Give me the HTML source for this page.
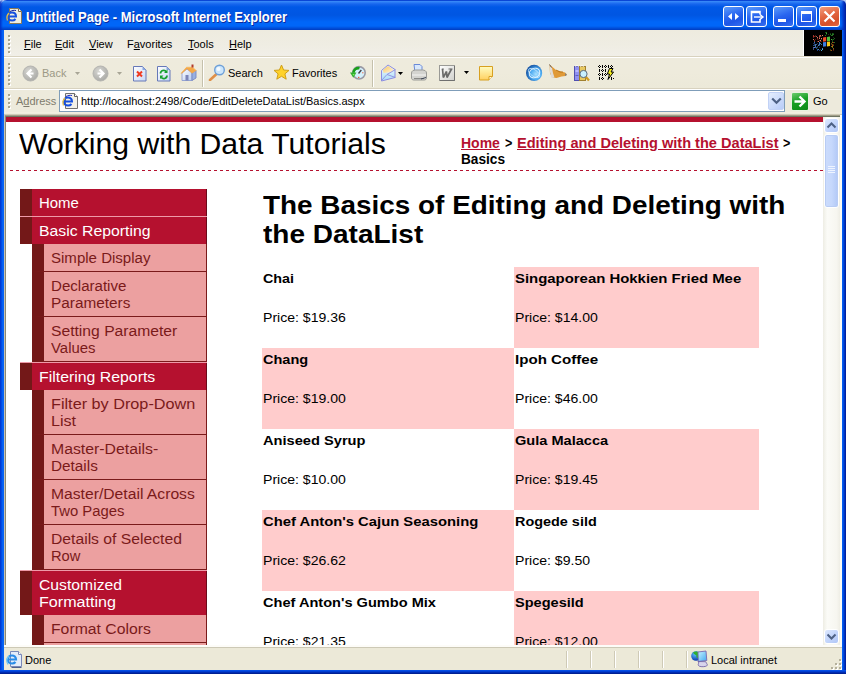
<!DOCTYPE html>
<html><head><meta charset="utf-8">
<style>
*{margin:0;padding:0;box-sizing:border-box}
html,body{width:846px;height:674px;overflow:hidden;background:#B4CAF4;font-family:"Liberation Sans",sans-serif}
div,svg{position:absolute}
.t{white-space:nowrap;transform-origin:0 0}
.t u{text-decoration:underline}
.c{font-size:11px;line-height:14px;color:#000;white-space:nowrap}
.btn{top:6px;width:21px;height:21px;border:1px solid #fff;border-radius:3px;background:linear-gradient(160deg,#5C9CFA 0%,#2A66F0 45%,#1E56E6 70%,#3570F2 100%)}
.grip{width:2px;background-image:linear-gradient(#A8A48E 2px,transparent 2px);background-size:2px 4px}
.gripw{width:2px;background-image:linear-gradient(#FFFFFF 2px,transparent 2px);background-size:2px 4px}
.sep{top:651px;width:2px;height:17px;border-left:1px solid #CFCAB6;border-right:1px solid #fff}
</style></head><body>
<!-- title bar -->
<div style="left:0;top:0;width:846px;height:30px;border-radius:7px 7px 0 0;background:linear-gradient(#0A46D6 0px,#0A46D6 1px,#3D8EF8 1px,#2F80F6 2px,#1766EE 4px,#0058E6 7px,#0056E2 15px,#005EEE 19px,#0066F8 22px,#0066F8 26px,#0050DC 28px,#003CC0 30px)"></div>
<div style="left:0;top:0;width:3px;height:30px;border-radius:7px 0 0 0;background:linear-gradient(90deg,#0030C8,transparent)"></div>
<div style="left:841px;top:0;width:5px;height:30px;border-radius:0 7px 0 0;background:linear-gradient(90deg,transparent,#0030C0 60%,#001C98)"></div>
<svg style="left:4px;top:4px" width="22" height="24" viewBox="0 0 22 24">
  <path d="M5.5 4.5h9l3 3v12h-12z" fill="#F0EEE2" stroke="#8A7A5A"/>
  <path d="M14.5 4.5v3h3" fill="#fff" stroke="#7A6A50"/>
  <path d="M4.5 12.5h7.5c0-2.6-1.8-4-4-4s-4.2 1.6-4.2 4 2 4 4.3 4c1.4 0 2.6-.6 3.4-1.5" fill="none" stroke="#1550E0" stroke-width="2"/>
  <path d="M5 9c-2 2-2.5 5-1.5 7.5" fill="none" stroke="#E8C040" stroke-width="1.3"/>
  <path d="M6 7.5c2-1 4-1.5 6-1" fill="none" stroke="#1020A0" stroke-width="1"/>
</svg>
<div class="t" style="left:26px;top:7px;font-size:14px;line-height:20px;font-weight:bold;color:#fff;text-shadow:1px 1px 0 #0B2A9E;transform:scaleX(0.93)">Untitled Page - Microsoft Internet Explorer</div>
<div class="btn" style="left:723px"></div>
<svg style="left:723px;top:6px" width="21" height="21"><path d="M9 7v7l-4-3.5zM12 7v7l4-3.5z" fill="#fff"/></svg>
<div class="btn" style="left:746px"></div>
<svg style="left:746px;top:6px" width="21" height="21"><path d="M5.5 7.5V5.5h8.5v3M5.5 5.5v10.5h8.5v-3" fill="none" stroke="#fff" stroke-width="1.6"/><path d="M5.5 6.2h8.5" stroke="#fff" stroke-width="2"/><path d="M8 11h8" stroke="#fff" stroke-width="1.4"/><path d="M14 8.5l3 2.5-3 2.5" fill="none" stroke="#fff" stroke-width="1.4"/></svg>
<div class="btn" style="left:773px"></div>
<div style="left:778px;top:19px;width:8px;height:3px;background:#fff"></div>
<div class="btn" style="left:796px"></div>
<div style="left:801px;top:11px;width:11px;height:11px;border:1px solid #fff;border-top:3px solid #fff"></div>
<div class="btn" style="left:819px;background:linear-gradient(160deg,#F29C7C 0%,#E2643E 45%,#D5502A 75%,#E06A44 100%)"></div>
<svg style="left:819px;top:6px" width="21" height="21"><path d="M5.5 5.5l10 10M15.5 5.5l-10 10" stroke="#fff" stroke-width="2.2"/></svg>

<!-- frame -->
<div style="left:0;top:30px;width:4px;height:644px;background:linear-gradient(90deg,#0034D0 0,#0040DA 1px,#0058EE 2px,#0866F8 3px,#0A60F0 4px)"></div>
<div style="left:842px;top:30px;width:4px;height:644px;background:linear-gradient(90deg,#0866F8 0,#0054E8 1px,#0040D4 2px,#0028B0 3px,#001C98 4px)"></div>
<div style="left:0;top:670px;width:846px;height:4px;background:linear-gradient(#0A56EC 0,#0048E0 1px,#0034C4 2px,#00249E 3px,#001C88 4px)"></div>

<!-- menu bar -->
<div style="left:4px;top:30px;width:838px;height:26px;background:linear-gradient(#EEEBDF,#EFEDE3 60%,#F1EFE8)"></div>
<div style="left:4px;top:56px;width:838px;height:1px;background:#D8D2BF"></div>
<div style="left:4px;top:57px;width:838px;height:1px;background:#fff"></div>
<div class="gripw" style="left:9px;top:36px;height:18px"></div><div class="grip" style="left:8px;top:35px;height:18px"></div>
<div class="c" style="left:24px;top:37px"><u>F</u>ile</div>
<div class="c" style="left:55px;top:37px"><u>E</u>dit</div>
<div class="c" style="left:89px;top:37px"><u>V</u>iew</div>
<div class="c" style="left:127px;top:37px">F<u>a</u>vorites</div>
<div class="c" style="left:188px;top:37px"><u>T</u>ools</div>
<div class="c" style="left:229px;top:37px"><u>H</u>elp</div>
<div style="left:803px;top:30px;width:1px;height:26px;background:#fff"></div>
<div style="left:804px;top:30px;width:38px;height:26px;background:#000"></div>
<svg style="left:804px;top:30px" width="38" height="26" viewBox="0 0 38 26"><rect x="13" y="13" width="1" height="1" fill="#2050A8" opacity="0.57"/><rect x="17" y="8" width="1" height="1" fill="#B83020" opacity="0.59"/><rect x="15" y="7" width="1" height="1" fill="#F08878" opacity="0.48"/><rect x="9" y="17" width="1" height="1" fill="#8090E0" opacity="0.68"/><rect x="14" y="11" width="1" height="1" fill="#F08878" opacity="0.69"/><rect x="15" y="7" width="1" height="1" fill="#C03028" opacity="0.80"/><rect x="9" y="5" width="1" height="1" fill="#E06050" opacity="0.66"/><rect x="16" y="10" width="1" height="1" fill="#B83020" opacity="0.81"/><rect x="14" y="15" width="1" height="1" fill="#2050A8" opacity="0.30"/><rect x="9" y="15" width="1" height="1" fill="#2050A8" opacity="0.90"/><rect x="18" y="18" width="1" height="1" fill="#8090E0" opacity="0.45"/><rect x="16" y="13" width="1" height="1" fill="#3060C0" opacity="0.34"/><rect x="16" y="11" width="1" height="1" fill="#D04838" opacity="0.53"/><rect x="18" y="18" width="1" height="1" fill="#3060C0" opacity="0.43"/><rect x="18" y="5" width="1" height="1" fill="#F08878" opacity="0.89"/><rect x="12" y="6" width="1" height="1" fill="#E8A080" opacity="0.42"/><rect x="15" y="10" width="1" height="1" fill="#D04838" opacity="0.50"/><rect x="18" y="17" width="1" height="1" fill="#3060C0" opacity="0.38"/><rect x="16" y="5" width="1" height="1" fill="#F08878" opacity="0.78"/><rect x="10" y="13" width="1" height="1" fill="#2050A8" opacity="0.61"/><rect x="18" y="17" width="1" height="1" fill="#2050A8" opacity="0.69"/><rect x="10" y="11" width="1" height="1" fill="#E06050" opacity="0.30"/><rect x="17" y="20" width="1" height="1" fill="#50C0E0" opacity="0.48"/><rect x="17" y="8" width="1" height="1" fill="#F08878" opacity="0.90"/><rect x="15" y="14" width="1" height="1" fill="#3060C0" opacity="0.89"/><rect x="11" y="9" width="1" height="1" fill="#B83020" opacity="0.50"/><rect x="11" y="6" width="1" height="1" fill="#C03028" opacity="0.43"/><rect x="15" y="5" width="1" height="1" fill="#D04838" opacity="0.52"/><rect x="13" y="20" width="1" height="1" fill="#2050A8" opacity="0.80"/><rect x="10" y="11" width="1" height="1" fill="#E8A080" opacity="0.39"/><rect x="18" y="18" width="1" height="1" fill="#4890E8" opacity="0.74"/><rect x="10" y="15" width="1" height="1" fill="#50C0E0" opacity="0.42"/><rect x="18" y="19" width="1" height="1" fill="#50C0E0" opacity="0.35"/><rect x="9" y="6" width="1" height="1" fill="#B83020" opacity="0.88"/><rect x="11" y="16" width="1" height="1" fill="#60A8F0" opacity="0.55"/><rect x="18" y="12" width="1" height="1" fill="#50C0E0" opacity="0.41"/><rect x="16" y="6" width="1" height="1" fill="#E06050" opacity="0.59"/><rect x="15" y="14" width="1" height="1" fill="#3060C0" opacity="0.47"/><rect x="18" y="8" width="1" height="1" fill="#C03028" opacity="0.34"/><rect x="13" y="8" width="1" height="1" fill="#C03028" opacity="0.41"/><rect x="12" y="14" width="1" height="1" fill="#4890E8" opacity="0.36"/><rect x="10" y="12" width="1" height="1" fill="#60A8F0" opacity="0.69"/><rect x="15" y="14" width="1" height="1" fill="#4890E8" opacity="0.65"/><rect x="18" y="12" width="1" height="1" fill="#60A8F0" opacity="0.72"/><rect x="18" y="5" width="1" height="1" fill="#E8A080" opacity="0.34"/><rect x="9" y="9" width="1" height="1" fill="#E06050" opacity="0.90"/><rect x="9" y="13" width="1" height="1" fill="#8090E0" opacity="0.33"/><rect x="18" y="16" width="1" height="1" fill="#4890E8" opacity="0.78"/><rect x="18" y="10" width="1" height="1" fill="#E8A080" opacity="0.58"/><rect x="9" y="18" width="1" height="1" fill="#3060C0" opacity="0.82"/><rect x="14" y="14" width="1" height="1" fill="#2050A8" opacity="0.53"/><rect x="9" y="6" width="1" height="1" fill="#C03028" opacity="0.68"/><rect x="18" y="19" width="1" height="1" fill="#8090E0" opacity="0.50"/><rect x="18" y="16" width="1" height="1" fill="#2050A8" opacity="0.56"/><rect x="17" y="6" width="1" height="1" fill="#B83020" opacity="0.32"/><rect x="15" y="12" width="1" height="1" fill="#4890E8" opacity="0.87"/><rect x="10" y="17" width="1" height="1" fill="#8090E0" opacity="0.85"/><rect x="11" y="5" width="1" height="1" fill="#D04838" opacity="0.39"/><rect x="15" y="13" width="1" height="1" fill="#60A8F0" opacity="0.70"/><rect x="13" y="19" width="1" height="1" fill="#60A8F0" opacity="0.54"/><rect x="11" y="15" width="1" height="1" fill="#4890E8" opacity="0.83"/><rect x="12" y="14" width="1" height="1" fill="#60A8F0" opacity="0.43"/><rect x="10" y="10" width="1" height="1" fill="#C03028" opacity="0.73"/><rect x="18" y="9" width="1" height="1" fill="#E06050" opacity="0.37"/><rect x="13" y="19" width="1" height="1" fill="#2050A8" opacity="0.53"/><rect x="14" y="15" width="1" height="1" fill="#8090E0" opacity="0.80"/><rect x="18" y="12" width="1" height="1" fill="#3060C0" opacity="0.80"/><rect x="11" y="14" width="1" height="1" fill="#8090E0" opacity="0.73"/><rect x="14" y="9" width="1" height="1" fill="#B83020" opacity="0.31"/><rect x="10" y="12" width="1" height="1" fill="#3060C0" opacity="0.76"/><rect x="11" y="17" width="1" height="1" fill="#3060C0" opacity="0.89"/><rect x="10" y="6" width="1" height="1" fill="#B83020" opacity="0.69"/><rect x="17" y="20" width="1" height="1" fill="#8090E0" opacity="0.42"/><rect x="17" y="9" width="1" height="1" fill="#E8A080" opacity="0.31"/><rect x="13" y="16" width="1" height="1" fill="#4890E8" opacity="0.44"/><rect x="16" y="13" width="1" height="1" fill="#50C0E0" opacity="0.60"/><rect x="18" y="7" width="1" height="1" fill="#E8A080" opacity="0.84"/><rect x="9" y="19" width="1" height="1" fill="#8090E0" opacity="0.53"/><rect x="13" y="8" width="1" height="1" fill="#C03028" opacity="0.53"/><rect x="14" y="19" width="1" height="1" fill="#60A8F0" opacity="0.58"/><rect x="15" y="8" width="1" height="1" fill="#E8A080" opacity="0.82"/><rect x="16" y="19" width="1" height="1" fill="#3060C0" opacity="0.43"/><rect x="17" y="20" width="1" height="1" fill="#60A8F0" opacity="0.62"/><rect x="16" y="10" width="1" height="1" fill="#E8A080" opacity="0.81"/><rect x="12" y="6" width="1" height="1" fill="#F08878" opacity="0.51"/><rect x="13" y="9" width="1" height="1" fill="#C03028" opacity="0.43"/><rect x="17" y="11" width="1" height="1" fill="#C03028" opacity="0.40"/><rect x="12" y="17" width="1" height="1" fill="#4890E8" opacity="0.58"/><rect x="18" y="19" width="1" height="1" fill="#50C0E0" opacity="0.80"/><rect x="15" y="20" width="1" height="1" fill="#2050A8" opacity="0.65"/><rect x="15" y="17" width="1" height="1" fill="#2050A8" opacity="0.62"/><rect x="11" y="16" width="1" height="1" fill="#8090E0" opacity="0.40"/><rect x="14" y="19" width="1" height="1" fill="#60A8F0" opacity="0.49"/><rect x="12" y="18" width="1" height="1" fill="#50C0E0" opacity="0.42"/><rect x="17" y="20" width="1" height="1" fill="#50C0E0" opacity="0.46"/><rect x="13" y="11" width="1" height="1" fill="#C03028" opacity="0.60"/><rect x="15" y="5" width="1" height="1" fill="#C03028" opacity="0.61"/><rect x="13" y="17" width="1" height="1" fill="#50C0E0" opacity="0.37"/><rect x="9" y="7" width="1" height="1" fill="#B83020" opacity="0.58"/><rect x="18" y="17" width="1" height="1" fill="#2050A8" opacity="0.46"/><rect x="13" y="7" width="1" height="1" fill="#F08878" opacity="0.84"/><rect x="18" y="19" width="1" height="1" fill="#50C0E0" opacity="0.49"/><rect x="10" y="14" width="1" height="1" fill="#60A8F0" opacity="0.38"/><rect x="16" y="5" width="1" height="1" fill="#E06050" opacity="0.39"/><rect x="9" y="9" width="1" height="1" fill="#E8A080" opacity="0.51"/><rect x="15" y="6" width="1" height="1" fill="#E8A080" opacity="0.65"/><rect x="17" y="14" width="1" height="1" fill="#8090E0" opacity="0.42"/><rect x="14" y="11" width="1" height="1" fill="#F08878" opacity="0.68"/><rect x="17" y="14" width="1" height="1" fill="#50C0E0" opacity="0.42"/><rect x="15" y="15" width="1" height="1" fill="#50C0E0" opacity="0.43"/><rect x="27" y="5" width="1" height="1" fill="#30A030" opacity="0.49"/><rect x="29" y="3" width="1" height="1" fill="#30A030" opacity="0.38"/><rect x="28" y="3" width="1" height="1" fill="#208820" opacity="0.71"/><rect x="30" y="12" width="1" height="1" fill="#30A030" opacity="0.72"/><rect x="27" y="5" width="1" height="1" fill="#208820" opacity="0.80"/><rect x="29" y="7" width="1" height="1" fill="#30A030" opacity="0.32"/><rect x="26" y="3" width="1" height="1" fill="#30A030" opacity="0.37"/><rect x="22" y="3" width="1" height="1" fill="#50C040" opacity="0.86"/><rect x="21" y="2" width="1" height="1" fill="#208820" opacity="0.58"/><rect x="28" y="5" width="1" height="1" fill="#50C040" opacity="0.56"/><rect x="24" y="4" width="1" height="1" fill="#50C040" opacity="0.31"/><rect x="28" y="11" width="1" height="1" fill="#30A030" opacity="0.54"/><rect x="30" y="8" width="1" height="1" fill="#30A030" opacity="0.61"/><rect x="29" y="9" width="1" height="1" fill="#208820" opacity="0.86"/><rect x="26" y="4" width="1" height="1" fill="#208820" opacity="0.89"/><rect x="29" y="4" width="1" height="1" fill="#30A030" opacity="0.75"/><rect x="28" y="10" width="1" height="1" fill="#50C040" opacity="0.38"/><rect x="22" y="4" width="1" height="1" fill="#30A030" opacity="0.34"/><rect x="21" y="5" width="1" height="1" fill="#208820" opacity="0.84"/><rect x="21" y="5" width="1" height="1" fill="#208820" opacity="0.48"/><rect x="22" y="2" width="1" height="1" fill="#208820" opacity="0.90"/><rect x="27" y="9" width="1" height="1" fill="#50C040" opacity="0.89"/><rect x="28" y="4" width="1" height="1" fill="#50C040" opacity="0.60"/><rect x="28" y="9" width="1" height="1" fill="#30A030" opacity="0.36"/><rect x="27" y="20" width="1" height="1" fill="#D04020" opacity="0.62"/><rect x="27" y="16" width="1" height="1" fill="#C0A020" opacity="0.68"/><rect x="29" y="12" width="1" height="1" fill="#D04020" opacity="0.70"/><rect x="29" y="15" width="1" height="1" fill="#C0A020" opacity="0.53"/><rect x="29" y="19" width="1" height="1" fill="#D04020" opacity="0.67"/><rect x="26" y="20" width="1" height="1" fill="#A08810" opacity="0.47"/><rect x="27" y="14" width="1" height="1" fill="#D04020" opacity="0.47"/><rect x="28" y="17" width="1" height="1" fill="#A08810" opacity="0.70"/><rect x="28" y="12" width="1" height="1" fill="#C0A020" opacity="0.65"/><rect x="28" y="15" width="1" height="1" fill="#D04020" opacity="0.53"/><rect x="29" y="18" width="1" height="1" fill="#C0A020" opacity="0.65"/><rect x="28" y="14" width="1" height="1" fill="#C0A020" opacity="0.56"/><rect x="27" y="20" width="1" height="1" fill="#C0A020" opacity="0.33"/><rect x="26" y="19" width="1" height="1" fill="#A08810" opacity="0.39"/><rect x="29" y="14" width="1" height="1" fill="#D04020" opacity="0.37"/><rect x="28" y="16" width="1" height="1" fill="#C0A020" opacity="0.82"/><rect x="27" y="13" width="1" height="1" fill="#A08810" opacity="0.57"/><rect x="28" y="16" width="1" height="1" fill="#A08810" opacity="0.68"/><rect x="28" y="15" width="1" height="1" fill="#D04020" opacity="0.62"/><rect x="29" y="20" width="1" height="1" fill="#D04020" opacity="0.38"/><rect x="18" y="6" width="9" height="12" fill="#000"/>
<path d="M19 7.5l3.2-.5v4.3l-3.2.4z" fill="#F04A24"/>
<path d="M23 7l3-.5v4.4l-3 .4z" fill="#50C040"/>
<path d="M19 12.3l3.2-.4v4.4l-3.2.4z" fill="#3C7CE0"/>
<path d="M23 11.8l3-.4v4.6l-3 .4z" fill="#F8C818"/></svg>

<!-- toolbar -->
<div style="left:4px;top:58px;width:838px;height:30px;background:linear-gradient(#EEEBDD,#EEEBDC 50%,#ECE9D9)"></div>
<div style="left:4px;top:88px;width:838px;height:1px;background:#D8D2BF"></div>
<div style="left:4px;top:89px;width:838px;height:1px;background:#fff"></div>
<div class="gripw" style="left:9px;top:64px;height:22px"></div><div class="grip" style="left:8px;top:63px;height:22px"></div>
<svg style="left:22px;top:65px" width="17" height="17"><defs><radialGradient id="gb" cx="40%" cy="35%" r="70%"><stop offset="0" stop-color="#D8D8D4"/><stop offset="1" stop-color="#A8A8A4"/></radialGradient></defs><circle cx="8.5" cy="8.5" r="7.5" fill="url(#gb)" stroke="#B4B4B0" stroke-width="1"/><path d="M9.5 4.5l-4 4 4 4M5.5 8.5h6" stroke="#fff" stroke-width="2.2" fill="none"/></svg>
<div class="c" style="left:42px;top:66px;color:#9C9986">Back</div>
<svg style="left:75px;top:72px" width="6" height="4"><path d="M0 0h5l-2.5 3z" fill="#A8A596"/></svg>
<svg style="left:92px;top:65px" width="17" height="17"><circle cx="8.5" cy="8.5" r="7.5" fill="url(#gb)" stroke="#B4B4B0" stroke-width="1"/><path d="M7.5 4.5l4 4-4 4M11.5 8.5h-6" stroke="#fff" stroke-width="2.2" fill="none"/></svg>
<svg style="left:117px;top:72px" width="6" height="4"><path d="M0 0h5l-2.5 3z" fill="#A8A596"/></svg>
<svg style="left:133px;top:66px" width="14" height="16"><defs><linearGradient id="gd" x1="0" y1="0" x2="1" y2="1"><stop offset="0" stop-color="#FFFFFF"/><stop offset="1" stop-color="#C6D6F4"/></linearGradient></defs><path d="M.5.5h9l3.5 3.5v11H.5z" fill="url(#gd)" stroke="#6678B8"/><path d="M9.5.5v3.5h3.5" fill="#8CA8E0"/><path d="M4 5.5l5 5M9 5.5l-5 5" stroke="#F03A20" stroke-width="2"/></svg>
<svg style="left:157px;top:66px" width="14" height="16"><path d="M.5.5h9l3.5 3.5v11H.5z" fill="url(#gd)" stroke="#6678B8"/><path d="M9.5.5v3.5h3.5" fill="#8CA8E0"/><path d="M3.5 7.5a3.2 3.2 0 0 1 5.8-1.8M10 9.5a3.2 3.2 0 0 1-5.8 1.8" stroke="#18A030" stroke-width="1.8" fill="none"/><path d="M10.5 3.5v3.5H7z M3 13v-3.5h3.5z" fill="#18A030"/></svg>
<svg style="left:179px;top:63px" width="19" height="19" viewBox="0 0 19 19">
  <defs><linearGradient id="gh" x1="0" y1="0" x2="1" y2="1"><stop offset="0" stop-color="#FFFFFF"/><stop offset="1" stop-color="#B8CCF0"/></linearGradient></defs>
  <path d="M3 10l5-4 5 4v7.5H3z" fill="url(#gh)" stroke="#8C9CD0" stroke-width=".9"/>
  <path d="M13 10l4-3v8l-4 2.5z" fill="#98B0E0" stroke="#7888C0" stroke-width=".9"/>
  <path d="M1.5 10.5l6-6.5h6l4 3.5-4.5 3-5-4.5-5 4.5z" fill="#F4A848"/>
  <path d="M7.5 4h6l4 3.5" fill="none" stroke="#F8D090" stroke-width=".8"/>
  <rect x="12.5" y="1.5" width="2" height="3" fill="#B03A2A"/>
  <rect x="6.5" y="12" width="3" height="5.5" fill="#7A84B8"/>
</svg>
<div style="left:202px;top:60px;width:2px;height:27px;border-left:1px solid #C5C1AC;border-right:1px solid #fff"></div>
<svg style="left:208px;top:64px" width="18" height="17"><path d="M8 10.5L2 16" stroke="#E09048" stroke-width="2.6" stroke-linecap="round"/><circle cx="11.5" cy="6" r="4.8" fill="#CCE6FC" stroke="#6EA0D8" stroke-width="1.4"/><circle cx="10.5" cy="5" r="2" fill="#F4FAFF"/></svg>
<div class="c" style="left:228px;top:66px">Search</div>
<svg style="left:273px;top:64px" width="17" height="17"><path d="M8.5 1l2.1 5 5.4.4-4.1 3.5 1.3 5.3-4.7-2.9-4.7 2.9 1.3-5.3L1 6.4l5.4-.4z" fill="#FFD22A" stroke="#D0A018"/></svg>
<div class="c" style="left:292px;top:66px">Favorites</div>
<svg style="left:346px;top:62px" width="24" height="22" viewBox="0 0 24 22">
  <circle cx="13" cy="10.8" r="6.2" fill="#D4F0FC" stroke="#9A9AA4" stroke-width="1.6"/>
  <path d="M12.5 11.5l2.8-3.5" stroke="#404048" stroke-width="1.4"/>
  <rect x="16.2" y="10" width="1.2" height="1.4" fill="#F08060"/><rect x="12" y="14.8" width="1.4" height="1.2" fill="#F06040"/>
  <path d="M13.5 6.2c-3-.6-5.6 1.2-6.2 4.6" fill="none" stroke="#18A018" stroke-width="2.6"/>
  <path d="M4 10.5h6.5l-3.2 5.2z" fill="#30B030"/>
  <path d="M6.5 12l1 1.8 1.2-1.8z" fill="#80F060"/>
</svg>
<div style="left:372px;top:60px;width:2px;height:27px;border-left:1px solid #C5C1AC;border-right:1px solid #fff"></div>
<svg style="left:376px;top:62px" width="22" height="22" viewBox="0 0 22 22">
  <defs><linearGradient id="gm" x1="0" y1="0" x2="0" y2="1"><stop offset="0" stop-color="#F4FBFF"/><stop offset="1" stop-color="#A8DCF8"/></linearGradient>
  <linearGradient id="gl" x1="0" y1="0" x2="1" y2="1"><stop offset="0" stop-color="#F8C860"/><stop offset="1" stop-color="#FFF4E0"/></linearGradient></defs>
  <path d="M5.5 8.5L12 3l7 4.5v8l-13.5 3.5z" fill="url(#gm)" stroke="#8C8CE0"/>
  <path d="M7 8l5-4 5.5 3.5-1 2.5-9 1z" fill="url(#gl)"/>
  <path d="M5.5 18.5l5.5-6 8.5 3M11 12.5l8.5-5" fill="none" stroke="#8C8CE0" stroke-width=".9"/>
</svg>
<svg style="left:398px;top:72px" width="6" height="4"><path d="M0 0h5l-2.5 3z" fill="#000"/></svg>
<svg style="left:410px;top:63px" width="18" height="19" viewBox="0 0 18 19">
  <path d="M4 1.5h6l2 2v6H5z" fill="#D8E8FC" stroke="#6A8AD8"/>
  <path d="M1.5 10c0-2 2-3 4-3h7c2 0 4 1 4 3v5c0 1-1 2-2 2H3.5c-1 0-2-1-2-2z" fill="#D4D4D0" stroke="#9A9A96"/>
  <path d="M2 12h14" stroke="#F0F0EE" stroke-width="1.2"/>
  <path d="M4 15.5h10" stroke="#8A8A86" stroke-width="1"/>
  <path d="M11 16l5-1.5" stroke="#404858" stroke-width="1"/>
</svg>
<svg style="left:439px;top:65px" width="17" height="17" viewBox="0 0 17 17">
  <defs><linearGradient id="gw" x1="0" y1="0" x2="1" y2="1"><stop offset="0" stop-color="#FFFFFF"/><stop offset="1" stop-color="#D0D0CC"/></linearGradient></defs>
  <rect x=".5" y=".5" width="15" height="15" fill="url(#gw)" stroke="#9A9A96"/>
  <path d="M15.5 1v14.5H1" fill="none" stroke="#707070"/>
  <path d="M3.5 4l.8 8.5 3.2-6 .5 6 4.5-8.5" stroke="#6A6A6A" stroke-width="1.7" fill="none" stroke-linejoin="bevel"/>
  <path d="M2.8 4h2M9.5 4h4" stroke="#6A6A6A" stroke-width="1"/>
</svg>
<svg style="left:464px;top:71px" width="6" height="4"><path d="M0 0h5l-2.5 3z" fill="#000"/></svg>
<svg style="left:479px;top:66px" width="15" height="15"><defs><linearGradient id="gn" x1="0" y1="0" x2="0" y2="1"><stop offset="0" stop-color="#FFFCC0"/><stop offset="1" stop-color="#FFD060"/></linearGradient></defs><path d="M.5.5h13v10l-3.5 3.5H.5z" fill="url(#gn)" stroke="#D8A020"/><path d="M13.5 10.5h-3.5v3.5" fill="#FFF8E0" stroke="#D8A020"/></svg>
<svg style="left:522px;top:62px" width="22" height="22" viewBox="0 0 22 22">
  <defs><radialGradient id="gs" cx="62%" cy="58%" r="62%"><stop offset="0" stop-color="#A8E0FF"/><stop offset=".55" stop-color="#4AA8F0"/><stop offset="1" stop-color="#1450A0"/></radialGradient></defs>
  <circle cx="12.1" cy="10.9" r="8.1" fill="url(#gs)"/>
  <ellipse cx="12.5" cy="11" rx="5.5" ry="4.6" fill="none" stroke="#E8F6FF" stroke-width=".9" transform="rotate(-30 12.5 11)"/>
  <ellipse cx="12" cy="11" rx="6.5" ry="3.2" fill="none" stroke="#D0ECFF" stroke-width=".7" transform="rotate(35 12 11)"/>
</svg>
<svg style="left:548px;top:63px" width="20" height="17" viewBox="0 0 20 17">
  <path d="M1.5 1.5l3 2.5 3.5 3 5 1.5 4 1 2 2-1.5 1.5-4 .5-5 1.5-4-.5-2.5-4z" fill="#E09A38"/>
  <path d="M1.5 1.5l2.5 3.5 1 5 1.5 4.5-3 .5-1.5-6z" fill="#E0DCD8"/>
  <path d="M1.5 1.5l2 3" stroke="#706050" stroke-width="1"/>
  <path d="M8 7l4 2 3 0" stroke="#B06A10" stroke-width=".8" fill="none"/>
  <path d="M17 10l2 2-2 1z" fill="#808080"/>
</svg>
<svg style="left:573px;top:65px" width="18" height="17" viewBox="0 0 18 17">
  <rect x="1.5" y="1.5" width="5" height="14" fill="#9090F0" stroke="#5050B0"/>
  <rect x="2.5" y="5" width="3" height="2" fill="#B8B8FF"/><rect x="2.5" y="10" width="3" height="1" fill="#6060C0"/>
  <rect x="6.5" y="1.5" width="6" height="14" fill="#E8C860" stroke="#A08030"/>
  <path d="M2 1.5l2-1 2 1M7 1.5l2-1 2 1" stroke="#fff" stroke-width=".8" fill="none"/>
  <path d="M12.5 11.5l3.5 4" stroke="#D09A20" stroke-width="2.4"/>
  <circle cx="10.5" cy="9" r="3.6" fill="#C8F0FF" stroke="#5A6A80" stroke-width="1"/>
</svg>
<svg style="left:596px;top:62px" width="21" height="21" viewBox="0 0 21 21"><g fill="#000"><rect x="3" y="3" width="1" height="1"/><rect x="2" y="4" width="1" height="1"/><rect x="4" y="4" width="1" height="1"/><rect x="3" y="5" width="1" height="1"/><rect x="6" y="3" width="1" height="3"/><rect x="9" y="3" width="1" height="1"/><rect x="8" y="4" width="1" height="1"/><rect x="10" y="4" width="1" height="1"/><rect x="9" y="5" width="1" height="1"/><rect x="12" y="3" width="1" height="3"/><rect x="15" y="3" width="1" height="1"/><rect x="14" y="4" width="1" height="1"/><rect x="16" y="4" width="1" height="1"/><rect x="15" y="5" width="1" height="1"/><rect x="3" y="7" width="1" height="3"/><rect x="6" y="7" width="1" height="1"/><rect x="5" y="8" width="1" height="1"/><rect x="7" y="8" width="1" height="1"/><rect x="6" y="9" width="1" height="1"/><rect x="9" y="7" width="1" height="3"/><rect x="3" y="11" width="1" height="1"/><rect x="2" y="12" width="1" height="1"/><rect x="4" y="12" width="1" height="1"/><rect x="3" y="13" width="1" height="1"/><rect x="6" y="11" width="1" height="3"/><rect x="9" y="11" width="1" height="1"/><rect x="8" y="12" width="1" height="1"/><rect x="10" y="12" width="1" height="1"/><rect x="9" y="13" width="1" height="1"/><rect x="3" y="15" width="1" height="3"/><rect x="6" y="15" width="1" height="1"/><rect x="5" y="16" width="1" height="1"/><rect x="7" y="16" width="1" height="1"/><rect x="6" y="17" width="1" height="1"/><rect x="15" y="15" width="1" height="3"/><rect x="17" y="16" width="1" height="1"/></g><path d="M13.5 6.5l3.5 0-2 3.5h2.5l-5.5 7.5 1.5-5.5h-2.2z" fill="#F8F020" stroke="#000" stroke-width="1"/></svg>

<!-- address bar -->
<div style="left:4px;top:90px;width:838px;height:22px;background:#EDEADC"></div>
<div style="left:4px;top:112px;width:838px;height:1px;background:#F2EDE0"></div>
<div style="left:4px;top:113px;width:838px;height:1px;background:#EDEBDD"></div>
<div style="left:4px;top:114px;width:838px;height:1px;background:#CFCBB8"></div>
<div class="gripw" style="left:9px;top:95px;height:14px"></div><div class="grip" style="left:8px;top:94px;height:14px"></div>
<div class="c" style="left:16px;top:94px;color:#7E7B6C">A<u>d</u>dress</div>
<div style="left:59px;top:90px;width:726px;height:22px;background:#fff;border:1px solid #7F9DB9"></div>
<svg style="left:60px;top:91px" width="20" height="20" viewBox="0 0 20 20">
  <path d="M5.5 2.5h9l3 3v12h-12z" fill="#F2F0E8" stroke="#707070"/>
  <path d="M14.5 2.5v3h3" fill="#fff" stroke="#606060"/>
  <path d="M4.5 10.5h7.5c0-2.6-1.8-4-4-4s-4.2 1.6-4.2 4 2 4 4.3 4c1.4 0 2.6-.6 3.4-1.5" fill="none" stroke="#1550E0" stroke-width="2"/>
  <path d="M5 7c-2 2-2.5 5-1.5 7.5" fill="none" stroke="#E8C040" stroke-width="1.3"/>
  <path d="M6 5.5c2-1 4-1.5 6-1" fill="none" stroke="#2030C0" stroke-width="1"/>
</svg>
<div class="c" style="left:81px;top:94px">http://localhost:2498/Code/EditDeleteDataList/Basics.aspx</div>
<div style="left:768px;top:92px;width:16px;height:18px;border:1px solid #C2D2F6;border-radius:2px;background:linear-gradient(135deg,#E4EEFE,#B8CCF8)"></div>
<svg style="left:771px;top:97px" width="11" height="8"><path d="M1.2 1.5l4.3 4.3 4.3-4.3" stroke="#4D6185" stroke-width="2.2" fill="none"/></svg>
<div style="left:791px;top:92px;width:18px;height:19px;border-radius:2px;border:1px solid #E8F0E0;background:linear-gradient(160deg,#6CCB6C,#18A024 45%,#0E8A18)"></div>
<svg style="left:791px;top:92px" width="18" height="19"><path d="M3.5 9.5h9M8.5 4.5l5 5-5 5" stroke="#fff" stroke-width="2.4" fill="none"/></svg>
<div class="c" style="left:813px;top:94px">Go</div>

<!-- content border -->
<div style="left:4px;top:115px;width:838px;height:1px;background:#A19E8A"></div>
<div style="left:4px;top:116px;width:838px;height:1px;background:#6E7562"></div>
<div style="left:4px;top:115px;width:1px;height:531px;background:#C8C4B2"></div>
<div style="left:5px;top:116px;width:1px;height:530px;background:#8A8776"></div>
<div style="left:840px;top:115px;width:2px;height:531px;background:#FDFCF6"></div>

<div style="left:6px;top:117px;width:817px;height:528px;background:#fff;overflow:hidden"><div style="left:-6px;top:-117px;width:846px;height:674px">
<div style="left:6px;top:117px;width:817px;height:5px;background:#B5112F"></div>
<div class="t" style="left:19px;top:127px;font-size:30px;line-height:34px;color:#000;transform:scaleX(1.0060);">Working with Data Tutorials</div>
<div class="t" style="left:461px;top:134px;font-size:14px;line-height:18px;color:#B5112F;font-weight:bold;"><u>Home</u></div>
<div class="t" style="left:505px;top:134px;font-size:14px;line-height:18px;color:#000;font-weight:bold;transform:scaleX(0.9000);">&gt;</div>
<div class="t" style="left:517px;top:134px;font-size:14px;line-height:18px;color:#B5112F;font-weight:bold;transform:scaleX(1.0410);"><u>Editing and Deleting with the DataList</u></div>
<div class="t" style="left:783px;top:134px;font-size:14px;line-height:18px;color:#000;font-weight:bold;transform:scaleX(0.9000);">&gt;</div>
<div class="t" style="left:461px;top:150px;font-size:14px;line-height:18px;color:#000;font-weight:bold;transform:scaleX(0.9750);">Basics</div>
<div style="left:10px;top:170px;width:813px;height:1px;background-image:linear-gradient(90deg,#B5112F 3px,transparent 3px);background-size:6px 1px"></div>
<div style="left:20px;top:189px;width:187px;height:27px;background:#B5112F;border-left:12px solid #731818;border-right:1px solid #6A0A1A"></div>
<div class="t" style="left:39px;top:194px;font-size:14px;line-height:18px;color:#fff;transform:scaleX(1.0670);">Home</div>
<div style="left:20px;top:217px;width:187px;height:27px;background:#B5112F;border-left:12px solid #731818;border-right:1px solid #6A0A1A"></div>
<div style="left:20px;top:216px;width:187px;height:1px;background:#EE9AA8"></div>
<div class="t" style="left:39px;top:222px;font-size:14px;line-height:18px;color:#fff;transform:scaleX(1.1280);">Basic Reporting</div>
<div style="left:32px;top:244px;width:175px;height:28px;background:#ECA0A0;border-left:12px solid #731818;border-right:1px solid #7A1A1A;border-bottom:1px solid #7A1A1A"></div>
<div class="t" style="left:51px;top:249px;font-size:14px;line-height:18px;color:#7A1A1A;transform:scaleX(1.0740);">Simple Display</div>
<div style="left:32px;top:272px;width:175px;height:45px;background:#ECA0A0;border-left:12px solid #731818;border-right:1px solid #7A1A1A;border-bottom:1px solid #7A1A1A"></div>
<div class="t" style="left:51px;top:277px;font-size:14px;line-height:18px;color:#7A1A1A;transform:scaleX(1.0760);">Declarative</div>
<div class="t" style="left:51px;top:294px;font-size:14px;line-height:18px;color:#7A1A1A;transform:scaleX(1.0960);">Parameters</div>
<div style="left:32px;top:317px;width:175px;height:45px;background:#ECA0A0;border-left:12px solid #731818;border-right:1px solid #7A1A1A;border-bottom:1px solid #7A1A1A"></div>
<div class="t" style="left:51px;top:322px;font-size:14px;line-height:18px;color:#7A1A1A;transform:scaleX(1.1190);">Setting Parameter</div>
<div class="t" style="left:51px;top:339px;font-size:14px;line-height:18px;color:#7A1A1A;transform:scaleX(1.0650);">Values</div>
<div style="left:20px;top:363px;width:187px;height:27px;background:#B5112F;border-left:12px solid #731818;border-right:1px solid #6A0A1A"></div>
<div style="left:20px;top:362px;width:187px;height:1px;background:#EE9AA8"></div>
<div class="t" style="left:39px;top:368px;font-size:14px;line-height:18px;color:#fff;transform:scaleX(1.1320);">Filtering Reports</div>
<div style="left:32px;top:390px;width:175px;height:45px;background:#ECA0A0;border-left:12px solid #731818;border-right:1px solid #7A1A1A;border-bottom:1px solid #7A1A1A"></div>
<div class="t" style="left:51px;top:395px;font-size:14px;line-height:18px;color:#7A1A1A;transform:scaleX(1.1590);">Filter by Drop-Down</div>
<div class="t" style="left:51px;top:412px;font-size:14px;line-height:18px;color:#7A1A1A;transform:scaleX(1.1500);">List</div>
<div style="left:32px;top:435px;width:175px;height:45px;background:#ECA0A0;border-left:12px solid #731818;border-right:1px solid #7A1A1A;border-bottom:1px solid #7A1A1A"></div>
<div class="t" style="left:51px;top:440px;font-size:14px;line-height:18px;color:#7A1A1A;transform:scaleX(1.1290);">Master-Details-</div>
<div class="t" style="left:51px;top:457px;font-size:14px;line-height:18px;color:#7A1A1A;transform:scaleX(1.0940);">Details</div>
<div style="left:32px;top:480px;width:175px;height:45px;background:#ECA0A0;border-left:12px solid #731818;border-right:1px solid #7A1A1A;border-bottom:1px solid #7A1A1A"></div>
<div class="t" style="left:51px;top:485px;font-size:14px;line-height:18px;color:#7A1A1A;transform:scaleX(1.1200);">Master/Detail Across</div>
<div class="t" style="left:51px;top:502px;font-size:14px;line-height:18px;color:#7A1A1A;transform:scaleX(1.0600);">Two Pages</div>
<div style="left:32px;top:525px;width:175px;height:45px;background:#ECA0A0;border-left:12px solid #731818;border-right:1px solid #7A1A1A;border-bottom:1px solid #7A1A1A"></div>
<div class="t" style="left:51px;top:530px;font-size:14px;line-height:18px;color:#7A1A1A;transform:scaleX(1.1210);">Details of Selected</div>
<div class="t" style="left:51px;top:547px;font-size:14px;line-height:18px;color:#7A1A1A;transform:scaleX(1.0500);">Row</div>
<div style="left:20px;top:571px;width:187px;height:44px;background:#B5112F;border-left:12px solid #731818;border-right:1px solid #6A0A1A"></div>
<div style="left:20px;top:570px;width:187px;height:1px;background:#EE9AA8"></div>
<div class="t" style="left:39px;top:576px;font-size:14px;line-height:18px;color:#fff;transform:scaleX(1.1230);">Customized</div>
<div class="t" style="left:39px;top:593px;font-size:14px;line-height:18px;color:#fff;transform:scaleX(1.1500);">Formatting</div>
<div style="left:32px;top:615px;width:175px;height:28px;background:#ECA0A0;border-left:12px solid #731818;border-right:1px solid #7A1A1A;border-bottom:1px solid #7A1A1A"></div>
<div class="t" style="left:51px;top:620px;font-size:14px;line-height:18px;color:#7A1A1A;transform:scaleX(1.1250);">Format Colors</div>
<div style="left:32px;top:643px;width:175px;height:28px;background:#ECA0A0;border-left:12px solid #731818;border-right:1px solid #7A1A1A;border-bottom:1px solid #7A1A1A"></div>
<div class="t" style="left:263px;top:191px;font-size:25px;line-height:29px;color:#000;font-weight:bold;transform:scaleX(1.1160);">The Basics of Editing and Deleting with</div>
<div class="t" style="left:263px;top:220px;font-size:25px;line-height:29px;color:#000;font-weight:bold;transform:scaleX(1.1200);">the DataList</div>
<div class="t" style="left:263px;top:270px;font-size:13px;line-height:17px;color:#000;font-weight:bold;transform:scaleX(1.1030);">Chai</div>
<div class="t" style="left:263px;top:309px;font-size:13px;line-height:17px;color:#000;transform:scaleX(1.0820);">Price: $19.36</div>
<div style="left:514px;top:267px;width:245px;height:81px;background:#FFCCCC"></div>
<div class="t" style="left:515px;top:270px;font-size:13px;line-height:17px;color:#000;font-weight:bold;transform:scaleX(1.1470);">Singaporean Hokkien Fried Mee</div>
<div class="t" style="left:515px;top:309px;font-size:13px;line-height:17px;color:#000;transform:scaleX(1.0820);">Price: $14.00</div>
<div style="left:262px;top:348px;width:252px;height:81px;background:#FFCCCC"></div>
<div class="t" style="left:263px;top:351px;font-size:13px;line-height:17px;color:#000;font-weight:bold;transform:scaleX(1.1160);">Chang</div>
<div class="t" style="left:263px;top:390px;font-size:13px;line-height:17px;color:#000;transform:scaleX(1.0820);">Price: $19.00</div>
<div class="t" style="left:515px;top:351px;font-size:13px;line-height:17px;color:#000;font-weight:bold;transform:scaleX(1.1620);">Ipoh Coffee</div>
<div class="t" style="left:515px;top:390px;font-size:13px;line-height:17px;color:#000;transform:scaleX(1.0820);">Price: $46.00</div>
<div class="t" style="left:263px;top:432px;font-size:13px;line-height:17px;color:#000;font-weight:bold;transform:scaleX(1.1260);">Aniseed Syrup</div>
<div class="t" style="left:263px;top:471px;font-size:13px;line-height:17px;color:#000;transform:scaleX(1.0820);">Price: $10.00</div>
<div style="left:514px;top:429px;width:245px;height:81px;background:#FFCCCC"></div>
<div class="t" style="left:515px;top:432px;font-size:13px;line-height:17px;color:#000;font-weight:bold;transform:scaleX(1.1210);">Gula Malacca</div>
<div class="t" style="left:515px;top:471px;font-size:13px;line-height:17px;color:#000;transform:scaleX(1.0820);">Price: $19.45</div>
<div style="left:262px;top:510px;width:252px;height:81px;background:#FFCCCC"></div>
<div class="t" style="left:263px;top:513px;font-size:13px;line-height:17px;color:#000;font-weight:bold;transform:scaleX(1.1390);">Chef Anton's Cajun Seasoning</div>
<div class="t" style="left:263px;top:552px;font-size:13px;line-height:17px;color:#000;transform:scaleX(1.0820);">Price: $26.62</div>
<div class="t" style="left:515px;top:513px;font-size:13px;line-height:17px;color:#000;font-weight:bold;transform:scaleX(1.1090);">Rogede sild</div>
<div class="t" style="left:515px;top:552px;font-size:13px;line-height:17px;color:#000;transform:scaleX(1.0820);">Price: $9.50</div>
<div class="t" style="left:263px;top:594px;font-size:13px;line-height:17px;color:#000;font-weight:bold;transform:scaleX(1.1210);">Chef Anton's Gumbo Mix</div>
<div class="t" style="left:263px;top:633px;font-size:13px;line-height:17px;color:#000;transform:scaleX(1.0820);">Price: $21.35</div>
<div style="left:514px;top:591px;width:245px;height:81px;background:#FFCCCC"></div>
<div class="t" style="left:515px;top:594px;font-size:13px;line-height:17px;color:#000;font-weight:bold;transform:scaleX(1.1190);">Spegesild</div>
<div class="t" style="left:515px;top:633px;font-size:13px;line-height:17px;color:#000;transform:scaleX(1.0820);">Price: $12.00</div>
</div></div>

<!-- scrollbar -->
<div style="left:823px;top:117px;width:17px;height:528px;background:linear-gradient(90deg,#EEEDE4,#FBFBF7 25%,#F7F6F0 80%,#EFEEE6)"></div>
<div style="left:824px;top:118px;width:15px;height:15px;border:1px solid #fff;border-radius:3px;background:linear-gradient(135deg,#DDE8FE,#C4D6FC 50%,#B0C6F6)"></div>
<svg style="left:826px;top:121px" width="11" height="8"><path d="M1.5 6.5l4-4 4 4" stroke="#4D6185" stroke-width="2" fill="none"/></svg>
<div style="left:824px;top:134px;width:15px;height:74px;border:1px solid #fff;border-radius:3px;box-shadow:inset 0 0 0 1px #B8CCF4;background:linear-gradient(90deg,#CCDCFC,#C6D8FC 50%,#B2C8F6)"></div>
<div style="left:828px;top:166px;width:7px;height:8px;background-image:linear-gradient(#EEF4FF 1px,#8CA4D8 1px,#8CA4D8 1px,transparent 1px);background-size:7px 2px"></div>
<div style="left:824px;top:629px;width:15px;height:15px;border:1px solid #fff;border-radius:3px;background:linear-gradient(135deg,#DDE8FE,#C4D6FC 50%,#B0C6F6)"></div>
<svg style="left:826px;top:633px" width="11" height="8"><path d="M1.5 1.5l4 4 4-4" stroke="#4D6185" stroke-width="2" fill="none"/></svg>

<!-- status bar -->
<div style="left:4px;top:645px;width:838px;height:2px;background:#FDFCF8"></div>
<div style="left:4px;top:647px;width:838px;height:1px;background:#CDC9B6"></div>
<div style="left:4px;top:648px;width:838px;height:22px;background:#ECE9D8"></div>
<svg style="left:4px;top:649px" width="20" height="20" viewBox="0 0 20 20">
  <path d="M6.5 2.5h8l3 3v12h-11z" fill="#E4ECFA" stroke="#7A88B8"/>
  <path d="M14.5 2.5v3h3" fill="#fff" stroke="#7A88B8"/>
  <path d="M7.5 18.5h10" stroke="#50608A"/>
  <path d="M4.5 10.5h7.5c0-2.6-1.8-4-4-4s-4.2 1.6-4.2 4 2 4 4.3 4c1.4 0 2.6-.6 3.4-1.5" fill="none" stroke="#2A8CE8" stroke-width="2.2"/>
  <path d="M5 7c-2.2 2-2.8 5.5-1 8.5" fill="none" stroke="#70C8F8" stroke-width="1.3"/>
</svg>
<div class="c" style="left:25px;top:653px">Done</div>
<div class="sep" style="left:566px"></div>
<div class="sep" style="left:590px"></div>
<div class="sep" style="left:614px"></div>
<div class="sep" style="left:638px"></div>
<div class="sep" style="left:662px"></div>
<div class="sep" style="left:686px"></div>
<svg style="left:686px;top:644px" width="24" height="24" viewBox="0 0 24 24">
  <defs><radialGradient id="gg" cx="40%" cy="30%" r="70%"><stop offset="0" stop-color="#60C8FF"/><stop offset="1" stop-color="#0838B0"/></radialGradient>
  <linearGradient id="gsc" x1="0" y1="0" x2="1" y2="1"><stop offset="0" stop-color="#C8F4FF"/><stop offset="1" stop-color="#40A8F0"/></linearGradient></defs>
  <circle cx="10" cy="12" r="4.8" fill="url(#gg)"/>
  <path d="M7 8.5c2-1.5 4.5-1.5 6 .5l-1 5c-1 .5-2-1-1.5-2.5-1-1-2.5-1-3.5-3z" fill="#30B030"/>
  <path d="M12 8l8-1 .8 9.5-8.5 1z" fill="url(#gsc)" stroke="#7868B0" stroke-width=".9"/>
  <path d="M12 17.5l1 1.5c-1 .6-1.2 2.5.3 3.2 2.2.8 5.8.6 7.4-.3.8-.6.8-1.6 0-2.4l-1-1.8z" fill="#D8D4EC" stroke="#6858A0" stroke-width=".8"/>
</svg>
<div class="c" style="left:711px;top:653px">Local intranet</div>
<svg style="left:828px;top:656px" width="14" height="14"><rect x="12" y="4" width="2" height="2" fill="#fff"/><rect x="8" y="8" width="2" height="2" fill="#fff"/><rect x="12" y="8" width="2" height="2" fill="#fff"/><rect x="4" y="12" width="2" height="2" fill="#fff"/><rect x="8" y="12" width="2" height="2" fill="#fff"/><rect x="12" y="12" width="2" height="2" fill="#fff"/><rect x="11" y="3" width="2" height="2" fill="#B4B09C"/><rect x="7" y="7" width="2" height="2" fill="#B4B09C"/><rect x="11" y="7" width="2" height="2" fill="#B4B09C"/><rect x="3" y="11" width="2" height="2" fill="#B4B09C"/><rect x="7" y="11" width="2" height="2" fill="#B4B09C"/><rect x="11" y="11" width="2" height="2" fill="#B4B09C"/></svg>
</body></html>
